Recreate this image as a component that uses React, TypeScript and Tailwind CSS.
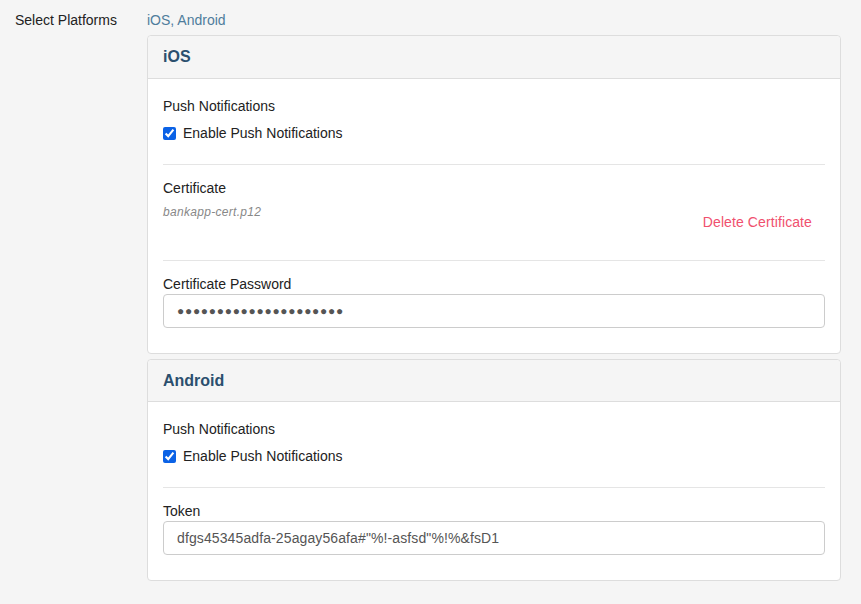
import React from "react";

function Divider() {
  return <div className="h-px bg-[#e5e5e5]" />;
}

function PushBlock() {
  return (
    <>
      <div className="leading-5">Push Notifications</div>
      <label className="mt-[7px] flex h-5 items-center gap-[7px] leading-5">
        <input type="checkbox" defaultChecked className="m-0 h-[13px] w-[13px] accent-[#0b62e6]" />
        <span>Enable Push Notifications</span>
      </label>
    </>
  );
}

function Panel({ title, tall, children }: { title: string; tall?: boolean; children: React.ReactNode }) {
  return (
    <div className="rounded-[4px] border border-[#dddddd] bg-white">
      <div
        className={
          tall
            ? "flex h-[43px] items-center rounded-t-[4px] border-b border-[#dddddd] bg-[#f5f5f5] px-[15px] text-[16px] font-bold text-[#2b4f6e]"
            : "flex h-[42px] items-center rounded-t-[4px] border-b border-[#dddddd] bg-[#f5f5f5] px-[15px] text-[16px] font-bold text-[#2b4f6e]"
        }
      >
        {title}
      </div>
      <div className="px-[15px] pt-[17px] pb-[25px]">{children}</div>
    </div>
  );
}

export default function App() {
  return (
    <div
      className="min-h-[604px] bg-[#f5f5f5] pt-[10px] text-[14px] text-[#222222]"
      style={{ fontFamily: '"Liberation Sans", Arial, sans-serif' }}
    >
      <div className="flex">
        <div className="w-[147px] pl-[15px] leading-5">Select Platforms</div>
        <div className="w-[694px]">
          <div className="leading-5 text-[#4f7d9c]">iOS, Android</div>
          <div className="mt-[5px] flex flex-col gap-[5px]">
            <Panel title="iOS" tall>
              <PushBlock />
              <div className="mt-[21px]">
                <Divider />
              </div>
              <div className="mt-[13px] flex items-start justify-between">
                <div>
                  <div className="leading-5">Certificate</div>
                  <div className="mt-[6px] text-[12px] italic leading-4 tracking-[0.3px] text-[#888888]">bankapp-cert.p12</div>
                </div>
                <button className="mt-[34px] mr-[13px] leading-5 tracking-[0.1px] text-[#f0506e]">Delete Certificate</button>
              </div>
              <div className="mt-[28px]">
                <Divider />
              </div>
              <div className="mt-[13px] leading-5">Certificate Password</div>
              <div className="flex h-[34px] items-center rounded-[4px] border border-[#cccccc] bg-white px-[13px] text-[12px] tracking-[0.7px] text-[#555555]">
                ●●●●●●●●●●●●●●●●●●●●●
              </div>
            </Panel>
            <Panel title="Android">
              <PushBlock />
              <div className="mt-[21px]">
                <Divider />
              </div>
              <div className="mt-[13px] leading-5">Token</div>
              <div className="flex h-[34px] items-center rounded-[4px] border border-[#cccccc] bg-white px-[13px] tracking-[0.11px] text-[#555555]">
                {'dfgs45345adfa-25agay56afa#"%!-asfsd"%!%&fsD1'}
              </div>
            </Panel>
          </div>
        </div>
      </div>
    </div>
  );
}
